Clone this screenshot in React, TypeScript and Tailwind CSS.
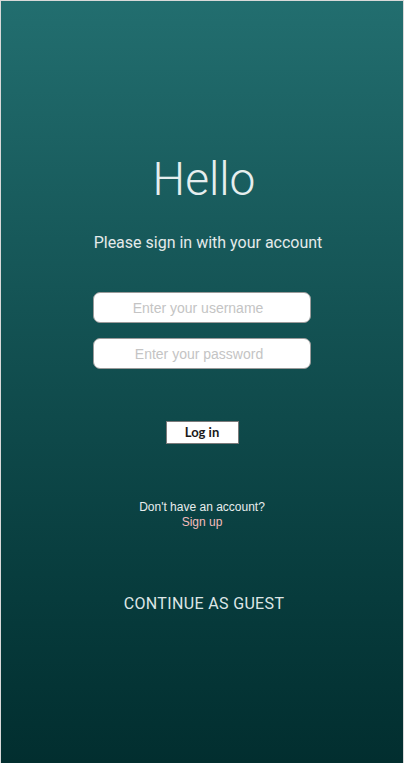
import React from 'react';

export default function App() {
    return (
        <div className="w-[404px] h-[763px] border-t border-x border-[#d9d9d9] bg-gradient-to-b from-[#226e6f] to-[#022e2f] flex flex-col items-center overflow-hidden font-['Roboto',sans-serif]">
            <h1 className="mt-[150px] ml-[4px] text-[46px] leading-[56px] font-light text-[#e6eeee]">
                Hello
            </h1>
            <p className="mt-[26px] ml-[12px] text-[16px] leading-[20px] text-[#e4eaea]">
                Please sign in with your account
            </p>
            <div className="mt-[39px] flex flex-col gap-[15px] font-['Liberation_Sans',Arial,sans-serif]">
                <input
                    type="text"
                    placeholder="Enter your username"
                    className="w-[218px] h-[31px] pr-[8px] rounded-[7px] bg-white border border-[#9a9a9a] text-center text-[14px] placeholder:text-[#c4c4c4] outline-none"
                />
                <input
                    type="password"
                    placeholder="Enter your password"
                    className="w-[218px] h-[31px] pr-[6px] rounded-[7px] bg-white border border-[#9a9a9a] text-center text-[14px] placeholder:text-[#c4c4c4] outline-none"
                />
            </div>
            <button className="mt-[52px] w-[73px] h-[23px] bg-white border border-[#7a7a7a] text-[13px] font-bold text-[#1a1a1a] flex items-center justify-center font-['Lato','Open_Sans',sans-serif]">
                Log in
            </button>
            <div className="mt-[55px] flex flex-col items-center text-[12px] leading-[16px] font-['Liberation_Sans',Arial,sans-serif]">
                <span className="text-[#e8eded]">Don't have an account?</span>
                <span className="-mt-[1px] text-[#f5bcbc]">Sign up</span>
            </div>
            <button className="mt-[64px] ml-[4px] text-[16px] leading-[20px] tracking-[0.35px] text-[#dde6e6]">
                CONTINUE AS GUEST
            </button>
        </div>
    );
}
